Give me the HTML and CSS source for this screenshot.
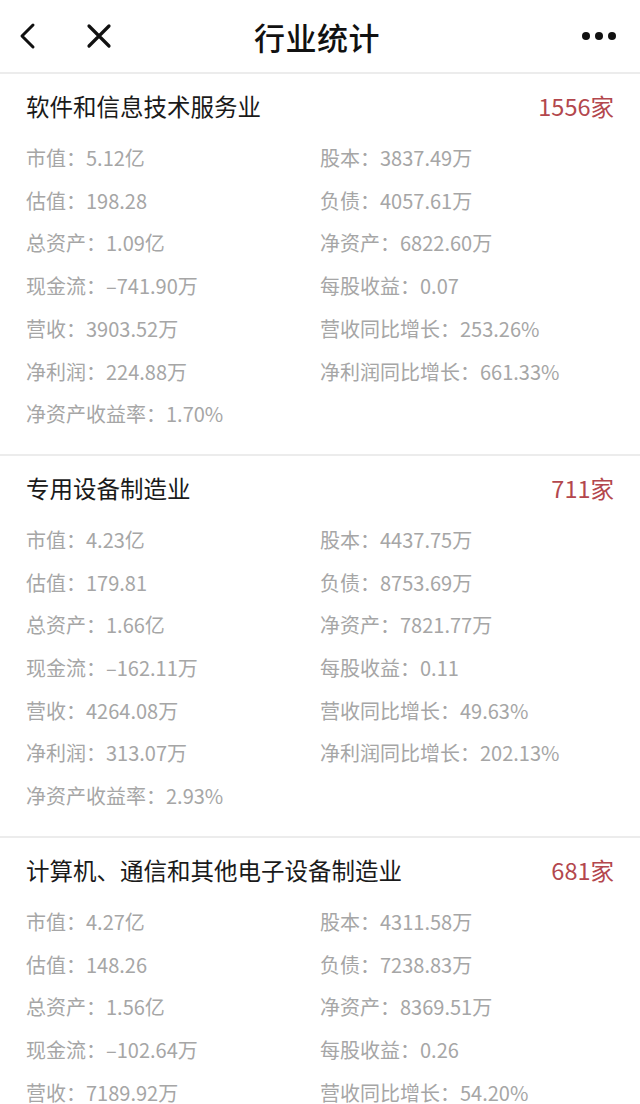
FILE: index.html
```html
<!DOCTYPE html>
<html lang="zh">
<head>
  <meta charset="UTF-8">
  <title>行业统计</title>
  <meta name="viewport" content="width=device-width, initial-scale=1">
  <link rel="stylesheet" href="styles.css">
</head>
<body>
  <div class="nav-bar">
    <div class="nav-left">
      <svg class="nav-icon" width="24" height="30" viewBox="0 0 24 30"><path d="M17 4 L6 15 L17 26" fill="none" stroke="#111" stroke-width="3" stroke-linecap="round" stroke-linejoin="round"/></svg>
      <svg class="nav-icon" width="30" height="30" viewBox="0 0 30 30"><path d="M5 5 L25 25 M25 5 L5 25" fill="none" stroke="#111" stroke-width="3.2" stroke-linecap="round"/></svg>
    </div>
    <div class="nav-title">行业统计</div>
    <div class="nav-more"><span></span><span></span><span></span></div>
  </div>

  <div class="industry">
    <div class="industry-head">
      <div class="industry-name">软件和信息技术服务业</div>
      <div class="industry-count">1556家</div>
    </div>
    <div class="stat-grid">
      <div>市值：5.12亿</div><div>股本：3837.49万</div>
      <div>估值：198.28</div><div>负债：4057.61万</div>
      <div>总资产：1.09亿</div><div>净资产：6822.60万</div>
      <div>现金流：–741.90万</div><div>每股收益：0.07</div>
      <div>营收：3903.52万</div><div>营收同比增长：253.26%</div>
      <div>净利润：224.88万</div><div>净利润同比增长：661.33%</div>
      <div>净资产收益率：1.70%</div>
    </div>
  </div>

  <div class="industry">
    <div class="industry-head">
      <div class="industry-name">专用设备制造业</div>
      <div class="industry-count">711家</div>
    </div>
    <div class="stat-grid">
      <div>市值：4.23亿</div><div>股本：4437.75万</div>
      <div>估值：179.81</div><div>负债：8753.69万</div>
      <div>总资产：1.66亿</div><div>净资产：7821.77万</div>
      <div>现金流：–162.11万</div><div>每股收益：0.11</div>
      <div>营收：4264.08万</div><div>营收同比增长：49.63%</div>
      <div>净利润：313.07万</div><div>净利润同比增长：202.13%</div>
      <div>净资产收益率：2.93%</div>
    </div>
  </div>

  <div class="industry">
    <div class="industry-head">
      <div class="industry-name">计算机、通信和其他电子设备制造业</div>
      <div class="industry-count">681家</div>
    </div>
    <div class="stat-grid">
      <div>市值：4.27亿</div><div>股本：4311.58万</div>
      <div>估值：148.26</div><div>负债：7238.83万</div>
      <div>总资产：1.56亿</div><div>净资产：8369.51万</div>
      <div>现金流：–102.64万</div><div>每股收益：0.26</div>
      <div>营收：7189.92万</div><div>营收同比增长：54.20%</div>
      <div>净利润：358.40万</div><div>净利润同比增长：118.62%</div>
      <div>净资产收益率：2.41%</div>
    </div>
  </div>
</body>
</html>
```

FILE: styles.css
```css
body {
  font-family: "Noto Sans CJK SC", "Noto Sans", sans-serif;
  background: #fff;
  margin: 0;
  padding: 0;
  color: #1a1a1a;
  height: 1104px;
  overflow: hidden;
}
.nav-bar {
  height: 72px;
  display: flex;
  align-items: center;
  justify-content: space-between;
  padding: 0 24px 0 16px;
  border-bottom: 2px solid #ececec;
}
.nav-left {
  display: flex;
  align-items: center;
  gap: 44px;
  width: 120px;
}
.nav-title {
  font-size: 31px;
  font-weight: 500;
  color: #111;
  letter-spacing: 0.5px;
  margin-left: 2px;
}
.nav-more {
  display: flex;
  gap: 5px;
  width: 120px;
  justify-content: flex-end;
}
.nav-more span {
  width: 8px;
  height: 8px;
  border-radius: 50%;
  background: #111;
}
.industry {
  padding: 14px 26px 18px 26px;
  border-bottom: 2px solid #ececec;
}
.industry-head {
  display: flex;
  justify-content: space-between;
  align-items: center;
  height: 36px;
  margin-bottom: 13px;
}
.industry-name {
  font-size: 23.5px;
  color: #1a1a1a;
}
.industry-count {
  font-size: 23.5px;
  color: #b3474d;
}
.stat-grid {
  display: grid;
  grid-template-columns: 294px 1fr;
  font-size: 20px;
  line-height: 42.7px;
  color: #a6a6a6;
}
```
